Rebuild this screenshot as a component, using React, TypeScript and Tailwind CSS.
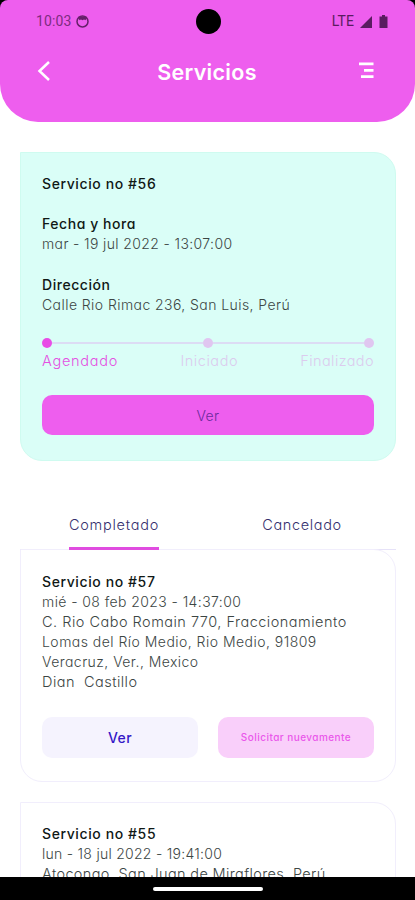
import clsx from 'clsx'

type Line = { text: string; className: string }

const completed: Line[] = [
  { text: 'mié - 08 feb 2023 - 14:37:00', className: 'tracking-[0.41px]' },
  { text: 'C. Rio Cabo Romain 770, Fraccionamiento', className: 'text-[14.5px] tracking-[0.49px]' },
  { text: 'Lomas del Río Medio, Rio Medio, 91809', className: 'tracking-[0.47px]' },
  { text: 'Veracruz, Ver., Mexico', className: 'tracking-[0.45px]' },
  { text: 'Dian  Castillo', className: 'text-[14.5px] tracking-[0.46px]' },
]

const previous: Line[] = [
  { text: 'lun - 18 jul 2022 - 19:41:00', className: 'tracking-[0.27px]' },
  { text: 'Atocongo, San Juan de Miraflores, Perú', className: 'text-[14.5px] tracking-[0.35px]' },
]

function Title({ text, className }: Line) {
  return (
    <h2 className="h-[20.2px] whitespace-nowrap text-[14px] leading-[20.2px] font-medium text-[#101816]">
      <span className={className}>{text}</span>
    </h2>
  )
}

function Detail({ text, className }: Line) {
  return (
    <p className="h-[20.2px] whitespace-pre text-[14px] leading-[20.2px] font-light text-[#3c4644]">
      <span className={className}>{text}</span>
    </p>
  )
}

function StatusBar() {
  return (
    <div className="flex h-[43px] items-center justify-between pl-[36px] pr-[27px] font-[Roboto,sans-serif] text-[14px] text-[#7d2c80]">
      <div className="flex w-[120px] items-center gap-[5px]">
        <span className="tracking-[0.1px]">10:03</span>
        <svg width="13" height="13" viewBox="0 0 13 13" fill="none" className="text-[#66206a]">
          <circle cx="6.5" cy="6.5" r="5.5" stroke="currentColor" strokeWidth="1.5" />
          <path d="M2.500 1.500h8L9.700 5.200 8 4.500 6.500 5.300 5 4.500 3.300 5.200Z" fill="currentColor" />
        </svg>
      </div>
      <div className="size-[25px] rounded-full bg-black" />
      <div className="flex w-[128px] items-center justify-end gap-[6px] text-[#5a1c60]">
        <span className="tracking-[0.1px]">LTE</span>
        <svg width="12" height="12" viewBox="0 0 12 12" fill="currentColor">
          <path d="M12 0v12H0Z" />
        </svg>
        <svg width="9" height="13" viewBox="0 0 9 13" fill="currentColor" className="ml-px">
          <path d="M3 0h3v1.500h2.500V13h-8V1.500H3Z" />
        </svg>
      </div>
    </div>
  )
}

function Header() {
  return (
    <header className="relative h-[121.5px] shrink-0 rounded-t-[8px] rounded-b-[38px] bg-[#ee5eee]">
      <StatusBar />
      <div className="flex h-[55px] items-center justify-between pl-[37px] pr-[41px] text-white">
        <svg width="14" height="20" viewBox="0 0 14 20" fill="none" stroke="currentColor" strokeWidth="2.5">
          <path d="M12 1 2.500 10l9.500 9" />
        </svg>
        <h1 className="pl-1 pt-[3px] text-[21.5px] font-semibold leading-7">
          <span className="tracking-[0.3px]">Servicios</span>
        </h1>
        <svg width="15" height="17" viewBox="0 0 15 17" fill="currentColor">
          <path d="M0 .5h14.500v2.800H0ZM5 7h9.500v2.800H5ZM2 13.300h12.500v2.800H2Z" />
        </svg>
      </div>
    </header>
  )
}

function Progress() {
  return (
    <div>
      <div className="flex h-[10px] items-center">
        <span className="size-[10px] rounded-full bg-[#e84ce6]" />
        <span className="h-[2px] flex-1 bg-[#dcdcf4]" />
        <span className="size-[10px] rounded-full bg-[#e0c6f0]" />
        <span className="h-[2px] flex-1 bg-[#dcdcf4]" />
        <span className="size-[10px] rounded-full bg-[#e0c6f0]" />
      </div>
      <div className="mt-[3.5px] flex justify-between text-[14.5px] leading-[20px] font-light text-[#dccbee]">
        <span className="tracking-[0.75px] text-[#e450e2]">Agendado</span>
        <span className="tracking-[0.55px]">Iniciado</span>
        <span className="tracking-[0.4px]">Finalizado</span>
      </div>
    </div>
  )
}

function Tabs() {
  return (
    <div className="mt-[38px] flex h-[51px] shrink-0 border-b-[1.5px] border-[#e6e2f8] text-[14.5px] leading-[20px] text-[#35306e]">
      <button className="relative flex flex-1 items-start justify-center pt-[16px] font-light">
        <span className="tracking-[0.75px]">Completado</span>
        <span className="absolute -bottom-px left-[49px] h-[3px] w-[90px] bg-[#e04ce0]" />
      </button>
      <button className="flex flex-1 items-start justify-center pt-[16px] font-light">
        <span className="tracking-[0.65px]">Cancelado</span>
      </button>
    </div>
  )
}

function Actions() {
  return (
    <div className="mt-[24px] flex gap-[20px] text-center">
      <button className="h-[41px] flex-1 rounded-[10px] bg-[#f5f3fe] text-[14px] font-medium text-[#3418c8]">
        <span className="tracking-[0.4px]">Ver</span>
      </button>
      <button className="h-[41px] flex-1 rounded-[10px] bg-[#f9cffa] text-[10px] font-medium text-[#ea58ea]">
        <span className="tracking-[0.45px]">Solicitar nuevamente</span>
      </button>
    </div>
  )
}

function ServiceCard({ title, lines, first }: { title: Line; lines: Line[]; first?: boolean }) {
  return (
    <article
      className={clsx(
        'h-[233px] shrink-0 rounded-[22px] rounded-tl-none border-[1.5px] border-[#f1eefc] px-[21px]',
        first ? '-mt-px pt-[21.5px]' : 'mt-[20px] pt-[21px]',
      )}
    >
      <Title {...title} />
      {lines.map(l => <Detail key={l.text} {...l} />)}
      {first && <Actions />}
    </article>
  )
}

export default function App() {
  return (
    <div className="relative flex h-[900px] w-[415px] flex-col overflow-hidden bg-white font-[Inter,sans-serif] [font-feature-settings:'cv11']">
      <div className="absolute inset-x-0 top-0 h-[9px] bg-black" />
      <Header />
      <main className="flex min-h-0 flex-1 flex-col overflow-hidden pl-[20px] pr-[19px] pt-[30.5px]">
        <section className="h-[309px] shrink-0 rounded-[22px] rounded-tl-none border border-[#cffbf0] bg-[#dafef7] px-[21px] pt-[21px]">
          <Title text="Servicio no #56" className="tracking-[0.6px]" />
          <div className="mt-[20px]">
            <Title text="Fecha y hora" className="tracking-[0.55px]" />
            <Detail text="mar - 19 jul 2022 - 13:07:00" className="tracking-[0.37px]" />
          </div>
          <div className="mt-[20px] mb-[23px]">
            <Title text="Dirección" className="tracking-[0.55px]" />
            <Detail text="Calle Rio Rimac 236, San Luis, Perú" className="tracking-[0.43px]" />
          </div>
          <Progress />
          <button className="mt-[24px] h-[40px] w-full rounded-[10px] bg-[#ee5eee] text-[14px] font-light text-[#6b2a9c]">
            <span className="tracking-[0.4px]">Ver</span>
          </button>
        </section>
        <Tabs />
        <ServiceCard title={{ text: 'Servicio no #57', className: 'tracking-[0.6px]' }} lines={completed} first />
        <ServiceCard title={{ text: 'Servicio no #55', className: 'tracking-[0.6px]' }} lines={previous} />
      </main>
      <footer className="flex h-[23px] shrink-0 justify-center bg-black pt-[9.5px]">
        <div className="h-[4px] w-[110px] rounded-full bg-white" />
      </footer>
    </div>
  )
}
